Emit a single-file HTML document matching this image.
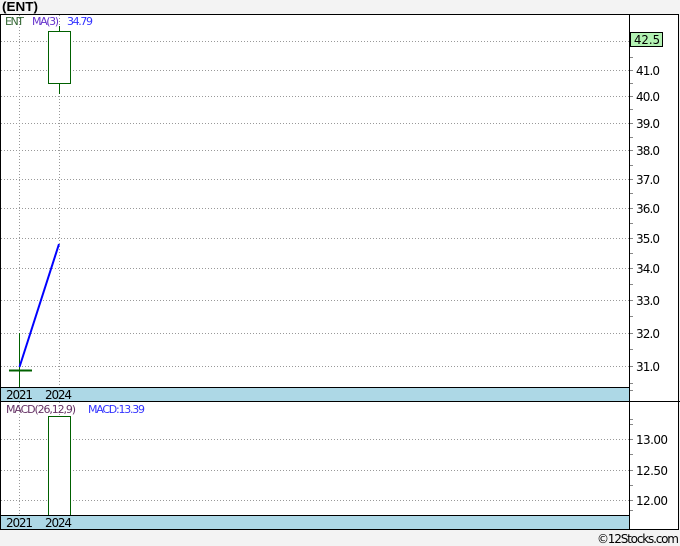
<!DOCTYPE html>
<html><head><meta charset="utf-8"><style>
html,body{margin:0;padding:0;background:#f3f3f3;}
svg{display:block;font-family:"DejaVu Sans","Liberation Sans",sans-serif;}
</style></head><body>
<svg width="680" height="546" viewBox="0 0 680 546" xmlns="http://www.w3.org/2000/svg">
<rect x="0" y="0" width="680" height="546" fill="#f3f3f3"/>
<text x="2" y="11" font-size="13" font-weight="bold" fill="#000" font-family="Liberation Sans,sans-serif" textLength="36" lengthAdjust="spacingAndGlyphs">(ENT)</text>
<rect x="0.5" y="14.5" width="678" height="515" fill="#fff" stroke="#000"/>
<g stroke="#999" stroke-dasharray="1,2" stroke-width="1">
<line x1="1" x2="629" y1="41.5" y2="41.5"/>
<line x1="1" x2="629" y1="70.5" y2="70.5"/>
<line x1="1" x2="629" y1="96.5" y2="96.5"/>
<line x1="1" x2="629" y1="123.5" y2="123.5"/>
<line x1="1" x2="629" y1="150.5" y2="150.5"/>
<line x1="1" x2="629" y1="179.5" y2="179.5"/>
<line x1="1" x2="629" y1="208.5" y2="208.5"/>
<line x1="1" x2="629" y1="238.5" y2="238.5"/>
<line x1="1" x2="629" y1="268.5" y2="268.5"/>
<line x1="1" x2="629" y1="300.5" y2="300.5"/>
<line x1="1" x2="629" y1="333.5" y2="333.5"/>
<line x1="1" x2="629" y1="366.5" y2="366.5"/>
<line x1="19.5" x2="19.5" y1="15" y2="387"/>
<line x1="59.5" x2="59.5" y1="15" y2="387"/>
<line x1="1" x2="629" y1="439.5" y2="439.5"/>
<line x1="1" x2="629" y1="470.5" y2="470.5"/>
<line x1="1" x2="629" y1="500.5" y2="500.5"/>
<line x1="19.5" x2="19.5" y1="402" y2="515"/>
<line x1="59.5" x2="59.5" y1="402" y2="515"/>
</g>
<g stroke="#888">
<line x1="629" x2="633" y1="41.5" y2="41.5"/><line x1="629" x2="633" y1="57.5" y2="57.5"/>
<line x1="629" x2="633" y1="70.5" y2="70.5"/><line x1="629" x2="633" y1="83.5" y2="83.5"/>
<line x1="629" x2="633" y1="96.5" y2="96.5"/><line x1="629" x2="633" y1="109.5" y2="109.5"/>
<line x1="629" x2="633" y1="123.5" y2="123.5"/><line x1="629" x2="633" y1="137.5" y2="137.5"/>
<line x1="629" x2="633" y1="150.5" y2="150.5"/><line x1="629" x2="633" y1="165.5" y2="165.5"/>
<line x1="629" x2="633" y1="179.5" y2="179.5"/><line x1="629" x2="633" y1="193.5" y2="193.5"/>
<line x1="629" x2="633" y1="208.5" y2="208.5"/><line x1="629" x2="633" y1="223.5" y2="223.5"/>
<line x1="629" x2="633" y1="238.5" y2="238.5"/><line x1="629" x2="633" y1="253.5" y2="253.5"/>
<line x1="629" x2="633" y1="268.5" y2="268.5"/><line x1="629" x2="633" y1="284.5" y2="284.5"/>
<line x1="629" x2="633" y1="300.5" y2="300.5"/><line x1="629" x2="633" y1="316.5" y2="316.5"/>
<line x1="629" x2="633" y1="333.5" y2="333.5"/><line x1="629" x2="633" y1="349.5" y2="349.5"/>
<line x1="629" x2="633" y1="366.5" y2="366.5"/><line x1="629" x2="633" y1="383.5" y2="383.5"/>
<line x1="629" x2="633" y1="390.5" y2="390.5"/>
<line x1="629" x2="633" y1="424.5" y2="424.5"/><line x1="629" x2="633" y1="439.5" y2="439.5"/>
<line x1="629" x2="633" y1="454.5" y2="454.5"/><line x1="629" x2="633" y1="470.5" y2="470.5"/>
<line x1="629" x2="633" y1="485.5" y2="485.5"/><line x1="629" x2="633" y1="500.5" y2="500.5"/>
<line x1="629" x2="633" y1="510.5" y2="510.5"/><line x1="629" x2="633" y1="419.5" y2="419.5"/>
</g>
<g font-size="12" fill="#000" lengthAdjust="spacingAndGlyphs">
<text x="636" y="75" textLength="24">41.0</text><text x="636" y="101" textLength="24">40.0</text>
<text x="636" y="128" textLength="24">39.0</text><text x="636" y="155" textLength="24">38.0</text>
<text x="636" y="184" textLength="24">37.0</text><text x="636" y="213" textLength="24">36.0</text>
<text x="636" y="243" textLength="24">35.0</text><text x="636" y="273" textLength="24">34.0</text>
<text x="636" y="305" textLength="24">33.0</text><text x="636" y="338" textLength="24">32.0</text>
<text x="636" y="371" textLength="24">31.0</text>
<text x="636" y="444" textLength="32">13.00</text><text x="636" y="475" textLength="32">12.50</text>
<text x="636" y="505" textLength="32">12.00</text>
</g>
<rect x="630.5" y="32.5" width="32" height="14" fill="#b3f2b3" stroke="#000"/>
<text x="634" y="44" font-size="12" fill="#000" textLength="26" lengthAdjust="spacingAndGlyphs">42.5</text>
<line x1="19.5" x2="19.5" y1="333" y2="387" stroke="#006000" stroke-width="1"/>
<line x1="9" x2="32" y1="370.5" y2="370.5" stroke="#006000" stroke-width="2"/>
<line x1="59.5" x2="59.5" y1="26" y2="94" stroke="#006000"/>
<rect x="48.5" y="31.5" width="22" height="52" fill="#fff" stroke="#006000"/>
<line x1="19.5" y1="367" x2="59" y2="244" stroke="#0000ff" stroke-width="2"/>
<g font-size="11" lengthAdjust="spacingAndGlyphs">
<text x="5" y="25" fill="#336633" textLength="19">ENT</text>
<text x="32" y="25" fill="#6633cc" textLength="27">MA(3)</text>
<text x="67" y="25" fill="#3333ff" textLength="26">34.79</text>
<text x="6" y="413" fill="#663366" textLength="70">MACD(26,12,9)</text>
<text x="88" y="413" fill="#3333ff" textLength="57">MACD:13.39</text>
</g>
<rect x="48.5" y="416.5" width="22" height="99" fill="#fff" stroke="#006000"/>
<line x1="629.5" x2="629.5" y1="14" y2="530" stroke="#000"/>
<rect x="1" y="388" width="628" height="13" fill="#add8e6"/>
<line x1="0" x2="629" y1="387.5" y2="387.5" stroke="#000"/>
<line x1="0" x2="680" y1="401.5" y2="401.5" stroke="#000"/>
<rect x="1" y="516" width="628" height="13" fill="#add8e6"/>
<line x1="0" x2="629" y1="515.5" y2="515.5" stroke="#000"/>
<g font-size="12" fill="#000" lengthAdjust="spacingAndGlyphs">
<text x="6" y="399" textLength="27">2021</text>
<text x="45" y="399" textLength="27">2024</text>
<text x="6" y="527" textLength="27">2021</text>
<text x="45" y="527" textLength="27">2024</text>
<text x="597" y="543" textLength="82">©12Stocks.com</text>
</g>
</svg>
</body></html>
